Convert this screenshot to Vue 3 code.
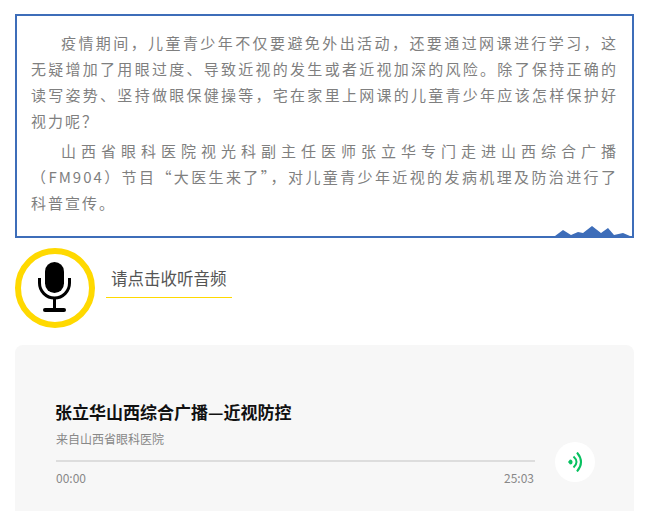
<script setup>
const paragraphs = [
  '疫情期间，儿童青少年不仅要避免外出活动，还要通过网课进行学习，这无疑增加了用眼过度、导致近视的发生或者近视加深的风险。除了保持正确的读写姿势、坚持做眼保健操等，宅在家里上网课的儿童青少年应该怎样保护好视力呢？',
  '山西省眼科医院视光科副主任医师张立华专门走进山西综合广播（FM904）节目“大医生来了”，对儿童青少年近视的发病机理及防治进行了科普宣传。'
]
</script>

<template>
  <div class="page">
    <section class="intro">
      <p v-for="(text, i) in paragraphs" :key="i" class="para">{{ text }}</p>
      <svg class="peaks" viewBox="0 0 80 12" width="80" height="12" aria-hidden="true">
        <path d="M3 12 L11 6 L19 11 L26 8 L31 9 L40 2 L49 9 L56 4 L62 11 L71 9 L78 12 Z" fill="#3d6db9" />
      </svg>
    </section>

    <div class="listen">
      <div class="mic">
        <svg viewBox="0 0 68 68" width="68" height="68" aria-hidden="true">
          <rect x="24" y="8" width="19" height="31" rx="9.5" fill="#000" />
          <path d="M18.5 24 V29 A15 15 0 0 0 48.5 29 V24" fill="none" stroke="#000" stroke-width="3" />
          <rect x="32" y="45" width="3" height="11" fill="#000" />
          <rect x="22" y="54" width="23" height="4" rx="2" fill="#000" />
        </svg>
      </div>
      <div class="label">请点击收听音频</div>
    </div>

    <section class="card">
      <div class="track">
        <h2 class="title">张立华山西综合广播—近视防控</h2>
        <div class="source">来自山西省眼科医院</div>
        <div class="bar"></div>
        <div class="times"><span>00:00</span><span class="total">25:03</span></div>
      </div>
      <div class="play">
        <svg viewBox="0 0 16 20" width="16" height="20" aria-hidden="true">
          <path d="M1 10 L3 7.5 A2.5 2.5 0 0 1 3 12.5 Z" fill="#07c160" />
          <path d="M6.5 4.5 Q12.5 10 6.5 15.5" fill="none" stroke="#07c160" stroke-width="2" />
          <path d="M10 0.5 Q18 10 10 19.5" fill="none" stroke="#07c160" stroke-width="2" />
        </svg>
      </div>
    </section>
  </div>
</template>

<style scoped>
.page {
  box-sizing: border-box;
  width: 646px;
  height: 511px;
  overflow: hidden;
  padding: 14px 12px 0 15px;
  font-family: "Noto Sans CJK SC", "Liberation Sans", sans-serif;
  background: #fff;
}
.intro {
  position: relative;
  box-sizing: border-box;
  height: 224px;
  padding: 14px 14px 0 14px;
  border: 2px solid #3d6db9;
}
.para {
  margin: 0 0 4px;
  font-size: 15px;
  line-height: 26px;
  letter-spacing: 2px;
  text-indent: 2em;
  text-align: justify;
  color: #7f7f7f;
}
.peaks {
  position: absolute;
  right: 0;
  bottom: 0;
  display: block;
}
.listen {
  display: flex;
  align-items: flex-start;
  margin-top: 10px;
}
.mic {
  box-sizing: border-box;
  flex: none;
  width: 80px;
  height: 80px;
  border: 6px solid #ffd900;
  border-radius: 50%;
  display: flex;
  align-items: center;
  justify-content: center;
}
.label {
  box-sizing: border-box;
  width: 126px;
  height: 50px;
  margin-left: 11px;
  padding: 18px 0 0 5px;
  border-bottom: 1px solid #ffd900;
  font-size: 16.5px;
  line-height: 24px;
  color: #555;
  white-space: nowrap;
}
.card {
  display: flex;
  align-items: flex-start;
  gap: 20px;
  height: 200px;
  margin-top: 17px;
  padding: 54px 39px 0 41px;
  border-radius: 8px;
  background: #f7f7f7;
}
.track {
  flex: 1;
  min-width: 0;
}
.title {
  margin: 0 0 0 -1px;
  font-size: 17px;
  line-height: 26px;
  font-weight: 700;
  color: #111;
}
.source {
  margin-top: 4px;
  font-size: 12px;
  line-height: 20px;
  color: #888;
}
.bar {
  height: 2px;
  margin-top: 11px;
  background: #ddd;
}
.times {
  display: flex;
  justify-content: space-between;
  margin-top: 7px;
  font-size: 12px;
  line-height: 18px;
  color: #888;
}
.total {
  margin-right: 1px;
}
.play {
  flex: none;
  width: 40px;
  height: 40px;
  margin-top: 43px;
  border-radius: 50%;
  background: #fff;
  display: flex;
  align-items: center;
  justify-content: center;
}
</style>
